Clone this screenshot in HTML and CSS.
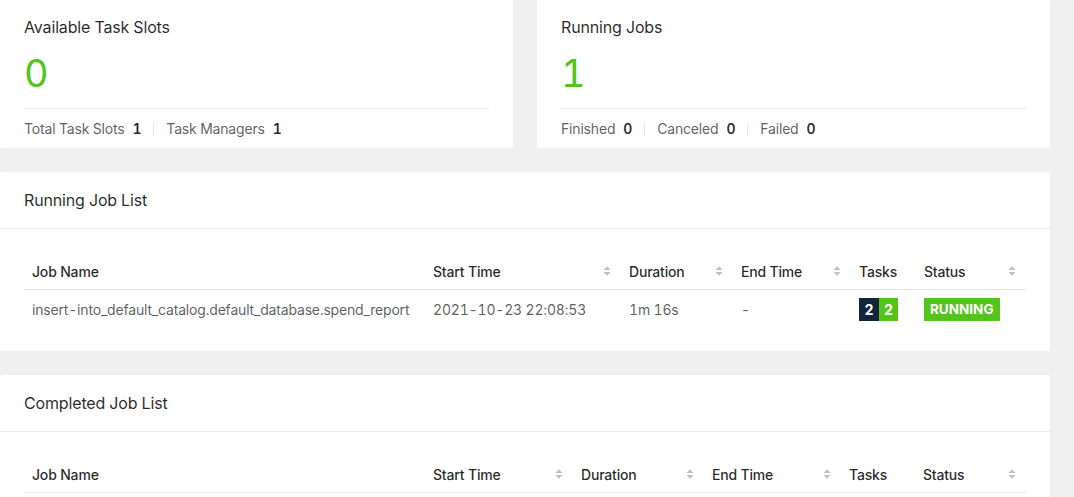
FILE: index.html
```html
<!DOCTYPE html>
<html>
<head>
<meta charset="utf-8">
<link rel="stylesheet" href="styles.css">
</head>
<body>
<div class="page">
  <div class="stats">
    <div class="card stat">
      <div class="stat-title">Available Task Slots</div>
      <div class="stat-value">0</div>
      <div class="stat-footer">
        <span class="label">Total Task Slots</span><span class="num">1</span>
        <span class="sep"></span>
        <span class="label">Task Managers</span><span class="num">1</span>
      </div>
    </div>
    <div class="card stat">
      <div class="stat-title">Running Jobs</div>
      <div class="stat-value">1</div>
      <div class="stat-footer">
        <span class="label">Finished</span><span class="num">0</span>
        <span class="sep"></span>
        <span class="label">Canceled</span><span class="num">0</span>
        <span class="sep"></span>
        <span class="label">Failed</span><span class="num">0</span>
      </div>
    </div>
  </div>

  <div class="card list">
    <div class="card-head">Running Job List</div>
    <div class="card-body">
      <table class="jobs">
        <colgroup>
          <col class="c-name"><col class="r-start"><col class="r-dur"><col class="r-end"><col class="r-tasks"><col class="r-status">
        </colgroup>
        <thead>
          <tr>
            <th>Job Name</th>
            <th><div class="th-sort"><span>Start Time</span><svg class="sorter" width="8" height="12" viewBox="0 0 8 12"><path d="M0.5 5L4 1.2L7.5 5Z M0.5 7L4 10.8L7.5 7Z" fill="#bfbfbf"/></svg></div></th>
            <th><div class="th-sort"><span>Duration</span><svg class="sorter" width="8" height="12" viewBox="0 0 8 12"><path d="M0.5 5L4 1.2L7.5 5Z M0.5 7L4 10.8L7.5 7Z" fill="#bfbfbf"/></svg></div></th>
            <th><div class="th-sort"><span>End Time</span><svg class="sorter" width="8" height="12" viewBox="0 0 8 12"><path d="M0.5 5L4 1.2L7.5 5Z M0.5 7L4 10.8L7.5 7Z" fill="#bfbfbf"/></svg></div></th>
            <th>Tasks</th>
            <th><div class="th-sort"><span>Status</span><svg class="sorter" width="8" height="12" viewBox="0 0 8 12"><path d="M0.5 5L4 1.2L7.5 5Z M0.5 7L4 10.8L7.5 7Z" fill="#bfbfbf"/></svg></div></th>
          </tr>
        </thead>
        <tbody>
          <tr>
            <td>insert-into_default_catalog.default_database.spend_report</td>
            <td>2021-10-23 22:08:53</td>
            <td>1m 16s</td>
            <td>-</td>
            <td><span class="tasks"><span class="t-dark">2</span><span class="t-green">2</span></span></td>
            <td><span class="status">RUNNING</span></td>
          </tr>
        </tbody>
      </table>
    </div>
  </div>

  <div class="card list">
    <div class="card-head">Completed Job List</div>
    <div class="card-body">
      <table class="jobs">
        <colgroup>
          <col class="c-name"><col class="d-start"><col class="d-dur"><col class="d-end"><col class="d-tasks"><col class="d-status">
        </colgroup>
        <thead>
          <tr>
            <th>Job Name</th>
            <th><div class="th-sort"><span>Start Time</span><svg class="sorter" width="8" height="12" viewBox="0 0 8 12"><path d="M0.5 5L4 1.2L7.5 5Z M0.5 7L4 10.8L7.5 7Z" fill="#bfbfbf"/></svg></div></th>
            <th><div class="th-sort"><span>Duration</span><svg class="sorter" width="8" height="12" viewBox="0 0 8 12"><path d="M0.5 5L4 1.2L7.5 5Z M0.5 7L4 10.8L7.5 7Z" fill="#bfbfbf"/></svg></div></th>
            <th><div class="th-sort"><span>End Time</span><svg class="sorter" width="8" height="12" viewBox="0 0 8 12"><path d="M0.5 5L4 1.2L7.5 5Z M0.5 7L4 10.8L7.5 7Z" fill="#bfbfbf"/></svg></div></th>
            <th>Tasks</th>
            <th><div class="th-sort"><span>Status</span><svg class="sorter" width="8" height="12" viewBox="0 0 8 12"><path d="M0.5 5L4 1.2L7.5 5Z M0.5 7L4 10.8L7.5 7Z" fill="#bfbfbf"/></svg></div></th>
          </tr>
        </thead>
      </table>
    </div>
  </div>
</div>
</body>
</html>
```

FILE: styles.css
```css
html, body {
  margin: 0;
  padding: 0;
  background: #f0f0f0;
  font-family: Inter, "Liberation Sans", sans-serif;
  font-size: 14px;
  letter-spacing: -0.18px;
  font-variant-numeric: tabular-nums;
  color: rgba(0, 0, 0, 0.85);
  overflow: hidden;
}

.page {
  padding: 0 24px 0 0;
  display: flex;
  flex-direction: column;
  gap: 24px;
}

.card {
  background: #fff;
  border-radius: 2px;
}

.stats {
  display: grid;
  grid-template-columns: 1fr 1fr;
  gap: 24px;
}

.stat {
  padding: 15px 24px 8px 24px;
}

.stat-title {
  font-size: 16px;
  line-height: 24px;
  letter-spacing: -0.15px;
  color: rgba(0, 0, 0, 0.85);
}

.stat-value {
  margin-top: 11px;
  font-size: 38px;
  line-height: 46px;
  letter-spacing: 0;
  color: #52c41a;
  padding-bottom: 12px;
  border-bottom: 1px solid #e8e8e8;
}

.stat-footer {
  margin-top: 9px;
  display: flex;
  align-items: center;
  line-height: 22px;
  font-size: 14px;
}

.stat-footer .label {
  color: rgba(0, 0, 0, 0.65);
}

.stat-footer .num {
  margin-left: 8px;
  font-weight: 600;
  color: rgba(0, 0, 0, 0.85);
}

.stat-footer .sep {
  width: 1px;
  height: 14px;
  background: #e8e8e8;
  margin: 0 12px;
}

.card-head {
  height: 56px;
  line-height: 56px;
  padding: 0 24px;
  font-size: 16px;
  letter-spacing: -0.15px;
  border-bottom: 1px solid #e8e8e8;
}

.card-body {
  padding: 24px;
}

.jobs {
  width: 100%;
  table-layout: fixed;
  border-collapse: collapse;
}

.c-name { width: 401px; }
.r-start { width: 196px; }
.r-dur { width: 112px; }
.r-end { width: 118px; }
.r-tasks { width: 65px; }
.r-status { width: 110px; }

.d-start { width: 148px; }
.d-dur { width: 131px; }
.d-end { width: 137px; }
.d-tasks { width: 74px; }
.d-status { width: 111px; }

.jobs th {
  height: 36px;
  padding: 0 8px;
  text-align: left;
  font-weight: 500;
  color: rgba(0, 0, 0, 0.85);
  border-bottom: 1px solid #e8e8e8;
  white-space: nowrap;
}

.th-sort {
  display: flex;
  align-items: center;
  justify-content: space-between;
  padding-right: 2px;
}

.sorter {
  display: block;
}

.jobs td {
  height: 35px;
  padding: 2px 8px 0 8px;
  color: rgba(0, 0, 0, 0.65);
  white-space: nowrap;
}

.tasks {
  display: inline-flex;
  height: 23px;
  line-height: 23px;
  font-weight: 700;
  font-size: 14px;
  letter-spacing: 0;
  color: #fff;
  vertical-align: middle;
}

.t-dark, .t-green {
  width: 19px;
  text-align: center;
}

.t-dark { background: #13243d; width: 20px; }
.t-green { background: #52c41a; }

.status {
  display: inline-block;
  height: 23px;
  line-height: 23px;
  padding: 0 6px;
  background: #52c41a;
  color: #fff;
  font-weight: 700;
  font-size: 13.5px;
  letter-spacing: 0;
  vertical-align: middle;
}
```
